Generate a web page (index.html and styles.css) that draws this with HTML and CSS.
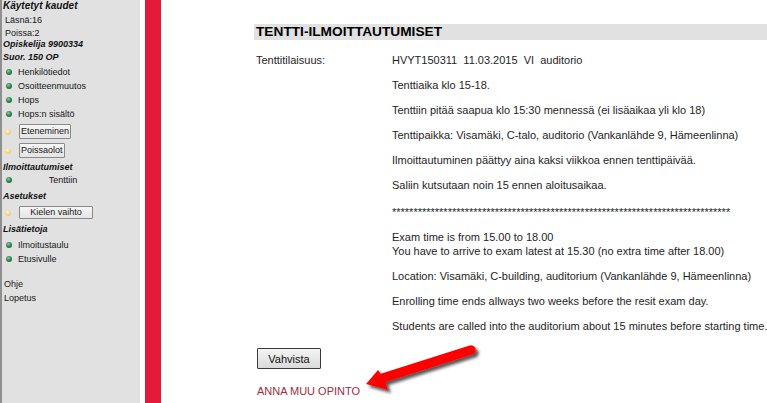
FILE: index.html
```html
<!DOCTYPE html>
<html lang="fi">
<head>
<meta charset="utf-8">
<title>Tentti-ilmoittautumiset</title>
<link rel="stylesheet" href="styles.css">
</head>
<body>
<div class="page">
  <aside class="sidebar">
    <div class="sec s-first">Käytetyt kaudet</div>
    <div class="info i-1">Läsnä:16</div>
    <div class="info i-2">Poissa:2</div>
    <div class="sec s-opis">Opiskelija 9900334</div>
    <div class="sec s-suor">Suor. 150 OP</div>
    <ul class="menu m-first">
      <li><span class="dot g"></span>Henkilötiedot</li>
      <li><span class="dot g"></span>Osoitteenmuutos</li>
      <li><span class="dot g"></span>Hops</li>
      <li><span class="dot g"></span>Hops:n sisältö</li>
    </ul>
    <div class="btnrow br-1"><span class="dot y"></span><button class="sbtn">Eteneminen</button></div>
    <div class="btnrow br-2"><span class="dot y"></span><button class="sbtn">Poissaolot</button></div>
    <div class="sec s-ilm">Ilmoittautumiset</div>
    <ul class="menu m-ilm">
      <li><span class="dot g"></span><span class="center">Tenttiin</span></li>
    </ul>
    <div class="sec s-ase">Asetukset</div>
    <div class="btnrow br-3"><span class="dot y"></span><button class="sbtn wide">Kielen vaihto</button></div>
    <div class="sec s-lis">Lisätietoja</div>
    <ul class="menu m-lis">
      <li><span class="dot g"></span>Ilmoitustaulu</li>
      <li><span class="dot g"></span>Etusivulle</li>
    </ul>
    <ul class="links">
      <li>Ohje</li>
      <li>Lopetus</li>
    </ul>
  </aside>
  <div class="redbar"></div>
  <main class="main">
    <h1 class="title">TENTTI-ILMOITTAUTUMISET</h1>
    <div class="exam">
      <div class="label">Tenttitilaisuus:</div>
      <div class="details">
        <p>HVYT150311&nbsp;&nbsp;11.03.2015&nbsp;&nbsp;VI&nbsp;&nbsp;auditorio</p>
        <p>Tenttiaika klo 15-18.</p>
        <p>Tenttiin pitää saapua klo 15:30 mennessä (ei lisäaikaa yli klo 18)</p>
        <p>Tenttipaikka: Visamäki, C-talo, auditorio (Vankanlähde 9, Hämeenlinna)</p>
        <p>Ilmoittautuminen päättyy aina kaksi viikkoa ennen tenttipäivää.</p>
        <p>Saliin kutsutaan noin 15 ennen aloitusaikaa.</p>
        <p class="stars">*******************************************************************************</p>
        <p class="after-stars">Exam time is from 15.00 to 18.00<br>You have to arrive to exam latest at 15.30 (no extra time after 18.00)</p>
        <p>Location: Visamäki, C-building, auditorium (Vankanlähde 9, Hämeenlinna)</p>
        <p>Enrolling time ends allways two weeks before the resit exam day.</p>
        <p>Students are called into the auditorium about 15 minutes before starting time.</p>
      </div>
    </div>
    <button class="confirm">Vahvista</button>
    <a class="other" href="#">ANNA MUU OPINTO</a>
    <svg class="arrow" width="130" height="70" viewBox="0 0 130 70" aria-hidden="true">
      <defs>
        <filter id="sh" x="-20%" y="-30%" width="150%" height="180%">
          <feDropShadow dx="3" dy="3" stdDeviation="1.6" flood-color="#000" flood-opacity="0.65"/>
        </filter>
      </defs>
      <g filter="url(#sh)">
        <line x1="116" y1="15" x2="28" y2="43" stroke="#ff0000" stroke-width="9.5" stroke-linecap="round"/>
        <polygon points="11,49 23,35 29,43 33,55" fill="#ff0000"/>
      </g>
    </svg>
  </main>
</div>
</body>
</html>
```
FILE: styles.css
```css
html, body {
  margin: 0;
  padding: 0;
  background: #ffffff;
}
body {
  font-family: "Liberation Sans", Arial, sans-serif;
  color: #1e1e1e;
}
.page {
  display: flex;
  width: 767px;
  height: 403px;
  overflow: hidden;
}
.sidebar {
  width: 138px;
  flex: none;
  background: #e1e1e1;
  border-left: 2px solid #8f8f8f;
  display: flex;
  flex-direction: column;
  font-size: 9px;
  color: #161616;
}
.sec {
  font-weight: bold;
  font-style: italic;
  font-size: 9px;
  height: 12px;
  line-height: 12px;
  padding-left: 1px;
  color: #111;
}
.s-first { font-size: 10px; }
.info {
  height: 13px;
  line-height: 13px;
  padding-left: 3px;
}
.i-1 { margin-top: 1px; height: 14px; line-height: 14px; }
.i-2 { height: 12px; line-height: 12px; }
.s-opis { height: 11px; line-height: 11px; }
.s-suor { margin-top: 1px; }
.menu, .links {
  list-style: none;
  margin: 0;
  padding: 0;
}
.menu li {
  display: flex;
  align-items: center;
  height: 14px;
  line-height: 14px;
  padding-left: 4px;
}
.m-first { margin-top: 2px; }
.dot {
  width: 6px;
  height: 6px;
  border-radius: 50%;
  flex: none;
  margin-right: 6px;
}
.dot.g {
  background: radial-gradient(circle at 40% 35%, #8fd0a6 0%, #3c8c5a 40%, #164a2a 100%);
}
.dot.y {
  background: radial-gradient(circle at 40% 35%, #fff6cf 0%, #f6d37a 55%, #e7b452 100%);
  margin-right: 8px;
}
.center {
  display: block;
  width: 90px;
  text-align: center;
}
.btnrow {
  display: flex;
  align-items: center;
  height: 15px;
  padding-left: 3px;
}
.br-1 { margin-top: 3px; }
.br-2 { margin-top: 4px; }
.br-3 { margin-top: 4px; height: 13px; }
.sbtn {
  font-family: "Liberation Sans", Arial, sans-serif;
  font-size: 9px;
  height: 15px;
  line-height: 13px;
  padding: 0 1px;
  margin: 0;
  border: 1px solid #8a8a8a;
  border-radius: 1px;
  background: linear-gradient(#f6f6f6, #e4e4e4);
  color: #161616;
}
.br-3 .sbtn { height: 13px; line-height: 11px; }
.sbtn.wide {
  width: 74px;
}
.s-ilm { margin-top: 3px; }
.m-ilm { margin-top: 0; }
.s-ase { margin-top: 3px; }
.s-lis { margin-top: 4px; }
.m-lis { margin-top: 3px; }
.links {
  margin-top: 11px;
}
.links li {
  height: 14px;
  line-height: 14px;
  padding-left: 2px;
}
.redbar {
  width: 16px;
  flex: none;
  margin-left: 5px;
  background: #e31a3a;
}
.main {
  position: relative;
  flex: 1;
  padding: 24px 0 0 93px;
  font-size: 11px;
}
.title {
  margin: 0;
  height: 16px;
  line-height: 16px;
  padding-left: 2px;
  background: #e1e1e1;
  font-size: 13.7px;
  font-weight: bold;
  color: #000;
}
.exam {
  display: grid;
  grid-template-columns: 136px 1fr;
  margin-top: 13px;
  padding-left: 2px;
}
.label {
  line-height: 14px;
}
.details p {
  margin: 0 0 11px;
  line-height: 14px;
  white-space: nowrap;
}
.details p.stars {
  line-height: 12px;
  padding-top: 3px;
  margin-bottom: 12px;
}
.details p:last-child {
  margin-bottom: 0;
}
.confirm {
  display: block;
  margin: 15px 0 0 3px;
  width: 64px;
  height: 21px;
  padding: 0;
  font-family: "Liberation Sans", Arial, sans-serif;
  font-size: 11px;
  color: #111;
  border: 1px solid #3a3a3a;
  border-radius: 1px;
  background: linear-gradient(#f4f4f4, #dadada);
}
.other {
  display: block;
  margin: 15px 0 0 3px;
  line-height: 14px;
  color: #a52a3c;
  text-decoration: none;
}
.arrow {
  position: absolute;
  left: 194px;
  top: 335px;
}
```
